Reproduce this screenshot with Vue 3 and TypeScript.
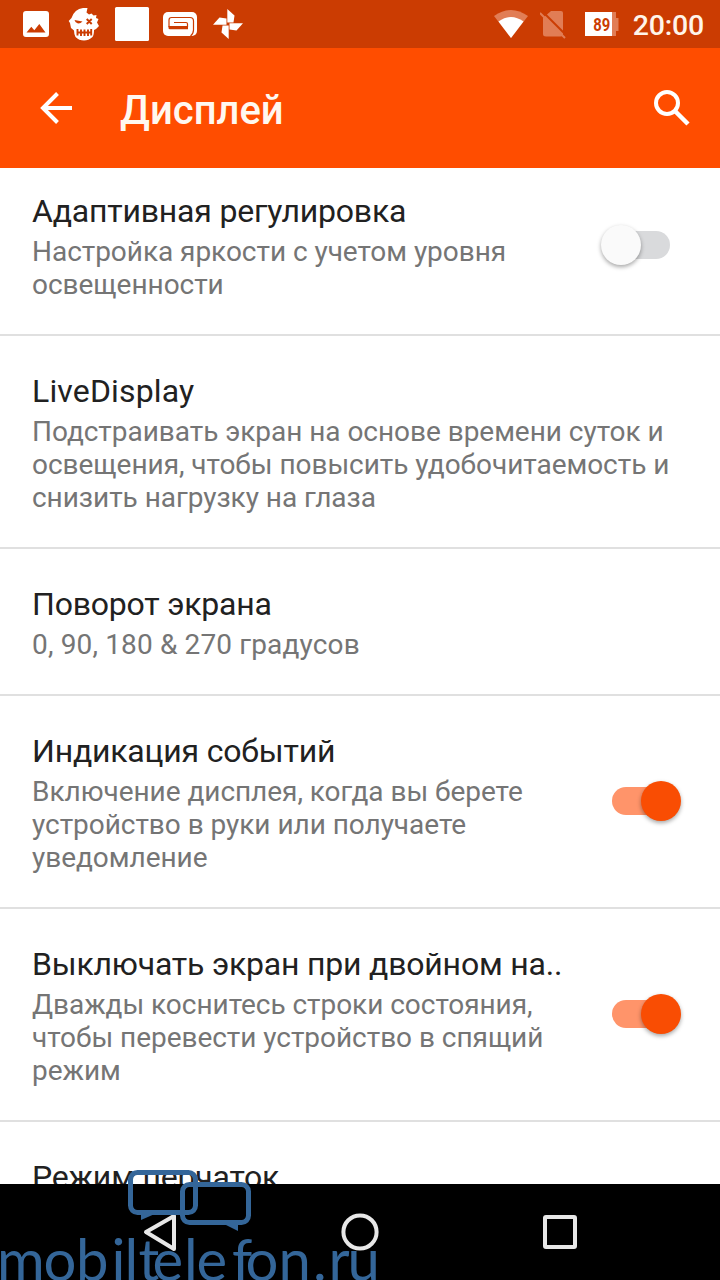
<script setup lang="ts">
interface Setting {
  title: string
  summary: string
  enabled?: boolean
  latin?: boolean
  numeric?: boolean
}

const settings: Setting[] = [
  { title: 'Адаптивная регулировка', summary: 'Настройка яркости с учетом уровня\nосвещенности', enabled: false },
  { title: 'LiveDisplay', summary: 'Подстраивать экран на основе времени суток и\nосвещения, чтобы повысить удобочитаемость и\nснизить нагрузку на глаза', latin: true },
  { title: 'Поворот экрана', summary: '0, 90, 180 & 270 градусов', numeric: true },
  { title: 'Индикация событий', summary: 'Включение дисплея, когда вы берете\nустройство в руки или получаете\nуведомление', enabled: true },
  { title: 'Выключать экран при двойном на..', summary: 'Дважды коснитесь строки состояния,\nчтобы перевести устройство в спящий\nрежим', enabled: true },
  { title: 'Режим перчаток', summary: '' },
]

const bladeAngles = [0, 90, 180, 270]
</script>

<template>
  <div class="screen">
    <div class="status">
      <div class="notifications">
        <svg viewBox="0 0 48 48">
          <path fill="#fff" fill-rule="evenodd" d="M14 11H34Q37 11 37 14V34Q37 37 34 37H14Q11 37 11 34V14Q11 11 14 11ZM14.500 32.500H33.500L27.300 24L22.300 30.300L19.300 26.700Z" />
        </svg>
        <svg viewBox="0 0 48 48">
          <path fill="#fff" d="M11.500 18Q14.500 9 23 8L27.500 8L26.500 12.500L29 14.500L31.500 13.500L33.500 15.500L36.500 15L36 18L38.500 19L37 22.500L39 26L36 29L34 30Q34 35 32.500 37Q28.500 40.500 24 40.500Q19 40.500 15.500 37Q14 34 14 30.500L11 28L10 23L8.700 21Z" />
          <path fill="#cb3c02" d="M14.500 20L22.500 21.500Q20 24 17.500 23.300Q15 22.500 14.500 20Z" />
          <path fill="none" stroke="#cb3c02" stroke-width="1.900" d="M26.700 19L31.700 24M31.700 19L26.700 24M16.500 32.500H31.500M17.500 29V35.500M21 29.500V36M24.500 29.500V36M28 29.500V36M31.200 29V35.500" />
        </svg>
        <svg viewBox="0 0 48 48"><rect x="7" y="7" width="34" height="34" rx="1.500" fill="#fff" /></svg>
        <svg viewBox="0 0 48 48">
          <rect x="7" y="12" width="34" height="24" rx="5" fill="#fff" />
          <path fill="none" stroke="#cb3c02" stroke-width="1.200" d="M13 27V20Q13 17.500 15.500 17.500H34Q37.500 17.500 37.500 21V30Q37.300 34 34.500 36M31.500 27V24Q31.500 22.500 30 22.500H18" />
          <path fill="#cb3c02" d="M12.500 26H32V29.300H14Q12.500 29.300 12.500 28Z" />
        </svg>
        <svg viewBox="0 0 48 48">
          <g fill="#fff">
            <path v-for="angle in bladeAngles" :key="angle" d="M23.300 9L30.500 15.500L29.500 22.500H23.300Z" :transform="`rotate(${angle} 24 24)`" />
          </g>
          <circle cx="24" cy="24" r="1" fill="#cb3c02" />
        </svg>
      </div>
      <div class="system">
        <svg class="wifi" viewBox="0 0 36 48">
          <path fill="#e17d55" d="M1 16Q18 4 35 16L18 38Z" />
          <path fill="#fff" d="M5.500 21.500Q18 12.500 30.500 21.500L18 38Z" />
        </svg>
        <svg class="sim" viewBox="0 0 28 48">
          <path fill="#e17d55" d="M11 11H21Q23 11 23 13V34Q23 36.500 20.500 36.500H6Q3 36.500 3 34V18Z" />
          <path stroke="#cb3c02" stroke-width="2" d="M2 11L27 36" />
          <path stroke="#e17d55" stroke-width="2" d="M0 13L25 38" />
        </svg>
        <svg class="battery" viewBox="0 0 34 48">
          <path fill="#e17d55" d="M26 12H31V18H33.500V31H31V36H26Z" />
          <path fill="#fff" d="M0 12H27V36H0Z" />
          <text x="8.300" y="30.500" textLength="17" lengthAdjust="spacingAndGlyphs">89</text>
        </svg>
        <span class="clock">20:00</span>
      </div>
    </div>

    <header class="toolbar">
      <svg class="back" viewBox="0 0 32 32">
        <path fill="none" stroke="#fff" stroke-width="4" d="M32 16H3M17.500 1.500L3 16L17.500 30.500" />
      </svg>
      <h1>Дисплей</h1>
      <svg class="search" viewBox="0 0 36 36">
        <circle cx="13" cy="13" r="11" fill="none" stroke="#fff" stroke-width="4" />
        <path stroke="#fff" stroke-width="4.500" d="M21.500 21.500L34 34" />
      </svg>
    </header>

    <main class="list">
      <section v-for="s in settings" :key="s.title" class="row">
        <div class="copy">
          <h2 :class="{ latin: s.latin }">{{ s.title }}</h2>
          <p v-if="s.summary" :class="{ numeric: s.numeric }">{{ s.summary }}</p>
        </div>
        <div v-if="s.enabled !== undefined" class="switch" :class="{ on: s.enabled }">
          <i class="thumb"></i>
        </div>
      </section>
    </main>

    <nav class="navbar">
      <svg viewBox="0 0 40 40"><path d="M6 20L34 4V37Z" /></svg>
      <svg viewBox="0 0 40 40"><circle cx="20" cy="20" r="16.600" /></svg>
      <svg viewBox="0 0 40 40"><rect x="5" y="5" width="30" height="30" rx="1" /></svg>
    </nav>

    <svg class="watermark" viewBox="0 0 390 120">
      <g fill="none" stroke="#346699" stroke-width="5">
        <rect x="130.500" y="12.500" width="65" height="40" rx="7" />
        <rect x="182.500" y="24.500" width="66" height="38" rx="7" />
      </g>
      <path fill="#346699" d="M141 53H157L141 60ZM222 63H238V71Z" />
      <text x="-3 43.500 76 111.500 124.500 138.500 152.500 184 196.500 232 245.500 278.500 313 328.500 347.500" y="121">mobiltelefon.ru</text>
    </svg>
  </div>
</template>

<style>
body {
  margin: 0;
}
</style>

<style scoped>
.screen {
  position: relative;
  display: flex;
  flex-direction: column;
  width: 720px;
  height: 1280px;
  overflow: hidden;
  background: #fff;
  font-family: Roboto, "Noto Sans", sans-serif;
}
.status {
  display: flex;
  justify-content: space-between;
  flex: 0 0 48px;
  height: 48px;
  padding: 0 16px 0 12px;
  background: #cb3c02;
}
.notifications,
.system {
  display: flex;
  align-items: center;
}
.notifications svg {
  width: 48px;
  height: 48px;
}
.system svg {
  height: 48px;
}
.wifi {
  width: 36px;
  margin-right: 11px;
}
.sim {
  width: 28px;
  margin-right: 17px;
}
.battery {
  width: 34px;
  margin-right: 14px;
}
.battery text {
  fill: #cb3c02;
  font: 700 18px Roboto, sans-serif;
}
.clock {
  padding-top: 4px;
  color: #fff4ea;
  font-size: 28.5px;
  font-weight: 500;
  line-height: 44px;
  letter-spacing: -0.2px;
}
.toolbar {
  display: flex;
  align-items: center;
  flex: 0 0 120px;
  box-sizing: border-box;
  padding: 0 30px 0 40px;
  background: #ff4d00;
}
.back {
  width: 32px;
  height: 32px;
}
h1 {
  flex: 1;
  margin: 6px 0 0 48px;
  color: #fff8f0;
  font-size: 40px;
  font-weight: 500;
  line-height: 48px;
}
.search {
  width: 36px;
  height: 36px;
}
.list {
  flex: 1;
  min-height: 0;
  overflow: hidden;
}
.row {
  display: flex;
  align-items: center;
  padding: 36px 39px 33px 32px;
  border-bottom: 2px solid #e0e0e0;
}
.row:first-child {
  margin-top: -12px;
}
.copy {
  flex: 1;
  white-space: pre;
}
h2 {
  margin: 0 0 5px;
  color: #212121;
  font-size: 32px;
  font-weight: 400;
  line-height: 38px;
  letter-spacing: -0.2px;
}
h2.latin {
  letter-spacing: 0.15px;
}
p {
  margin: 0;
  color: #757575;
  font-size: 28px;
  line-height: 33px;
  letter-spacing: -0.04px;
}
p.numeric {
  letter-spacing: 0.15px;
}
.switch {
  display: flex;
  align-items: center;
  width: 58px;
  height: 28px;
  margin: 0 11px 4px 0;
  border-radius: 14px;
  background: #d9dadc;
}
.thumb {
  flex: none;
  width: 40px;
  height: 40px;
  margin-left: -11px;
  border-radius: 50%;
  background: #fafafa;
  box-shadow: 0 2px 4px rgba(0, 0, 0, 0.35);
}
.on {
  background: #ff946a;
}
.on .thumb {
  margin-left: 29px;
  background: #f94d03;
}
.navbar {
  display: flex;
  justify-content: center;
  align-items: center;
  gap: 160px;
  flex: 0 0 96px;
  background: #000;
}
.navbar svg {
  width: 40px;
  height: 40px;
  fill: none;
  stroke: #e8e8e8;
  stroke-width: 4;
  stroke-linejoin: round;
}
.watermark {
  position: absolute;
  left: 0;
  bottom: 0;
  width: 390px;
  height: 120px;
}
.watermark text {
  fill: #346699;
  font: 400 58px Lato, sans-serif;
}
</style>
